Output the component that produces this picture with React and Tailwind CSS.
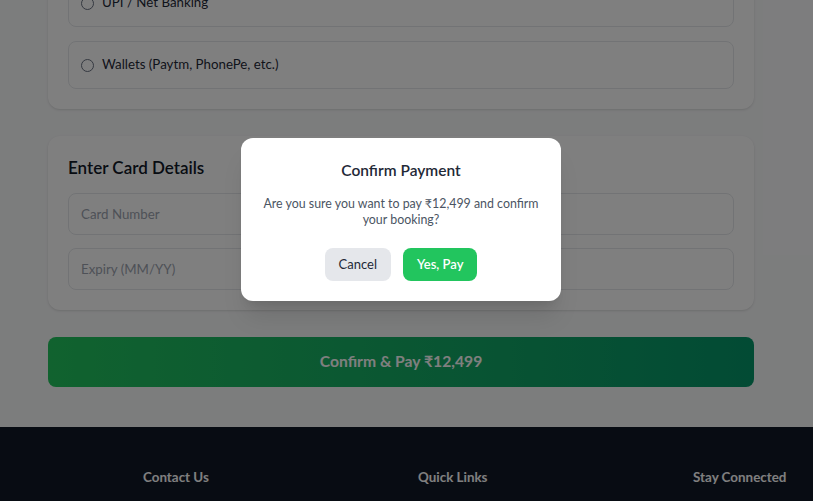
import React from 'react';

const PaymentOption = ({ label }) => (
  <label className="flex items-center gap-2 h-12 px-3 border border-[#e5e7eb] rounded-lg text-[13.3px] text-[#1f2937]">
    <span className="w-[13px] h-[13px] rounded-full border border-gray-500 bg-white shrink-0"></span>
    <span>{label}</span>
  </label>
);

const App = () => {
  return (
    <div className="relative h-[501px] overflow-hidden bg-[#f9fafb]" style={{ fontFamily: 'Lato, "Noto Sans", sans-serif' }}>
      {/* Page content, scrolled */}
      <div className="w-[802px] px-12 -mt-[147px]">
        <div className="bg-white rounded-xl shadow-sm p-5">
          <h2 className="text-[17px] font-semibold leading-7 mb-4 text-[#111827]">Select Payment Method</h2>
          <div className="flex flex-col gap-[14px]">
            <PaymentOption label="Credit / Debit Card" />
            <PaymentOption label="UPI / Net Banking" />
            <PaymentOption label="Wallets (Paytm, PhonePe, etc.)" />
          </div>
        </div>

        <div className="mt-[27px] bg-white rounded-xl shadow-sm p-5">
          <h2 className="text-[17px] font-semibold leading-6 mb-[13px] text-[#111827]">Enter Card Details</h2>
          <div className="flex flex-col gap-[13px]">
            <input
              className="h-[42px] w-full px-3 border border-[#e5e7eb] rounded-lg text-[13.3px] placeholder-[#9ca3af] outline-none"
              placeholder="Card Number"
            />
            <div className="grid grid-cols-2 gap-4">
              <input
                className="h-[42px] w-full px-3 border border-[#e5e7eb] rounded-lg text-[13.3px] placeholder-[#9ca3af] outline-none"
                placeholder="Expiry (MM/YY)"
              />
              <input
                className="h-[42px] w-full px-3 border border-[#e5e7eb] rounded-lg text-[13.3px] placeholder-[#9ca3af] outline-none"
                placeholder="CVV"
              />
            </div>
          </div>
        </div>

        <button className="mt-[27px] w-full h-[50px] rounded-lg bg-gradient-to-r from-[#22c55e] to-[#059669] text-white text-[15.7px] font-bold">
          Confirm &amp; Pay ₹12,499
        </button>
      </div>

      {/* Footer */}
      <footer className="mt-10 bg-[#111827] pt-10 pb-16">
        <div className="flex pl-[143px] text-[13.4px] font-bold text-white">
          <div className="w-[275px] shrink-0">Contact Us</div>
          <div className="w-[275px] shrink-0">Quick Links</div>
          <div className="shrink-0">Stay Connected</div>
        </div>
      </footer>

      {/* Modal overlay */}
      <div className="absolute inset-0 bg-black/50">
        <div className="w-[802px] flex justify-center pt-[138px]">
          <div className="w-80 bg-white rounded-xl shadow-xl p-5 text-center">
            <h3 className="text-[15.5px] font-semibold leading-6 text-[#1f2937]">Confirm Payment</h3>
            <p className="mt-[14px] text-[12.4px] leading-4 text-[#4b5563]">
              Are you sure you want to pay ₹12,499 and confirm your booking?
            </p>
            <div className="mt-5 flex justify-center gap-3">
              <button className="h-[33px] px-3.5 rounded-lg bg-[#e5e7eb] text-[13px] text-[#1f2937]">Cancel</button>
              <button className="h-[33px] px-3.5 rounded-lg bg-[#22c55e] text-[13px] font-semibold text-white">Yes, Pay</button>
            </div>
          </div>
        </div>
      </div>
    </div>
  );
};

export default App;
